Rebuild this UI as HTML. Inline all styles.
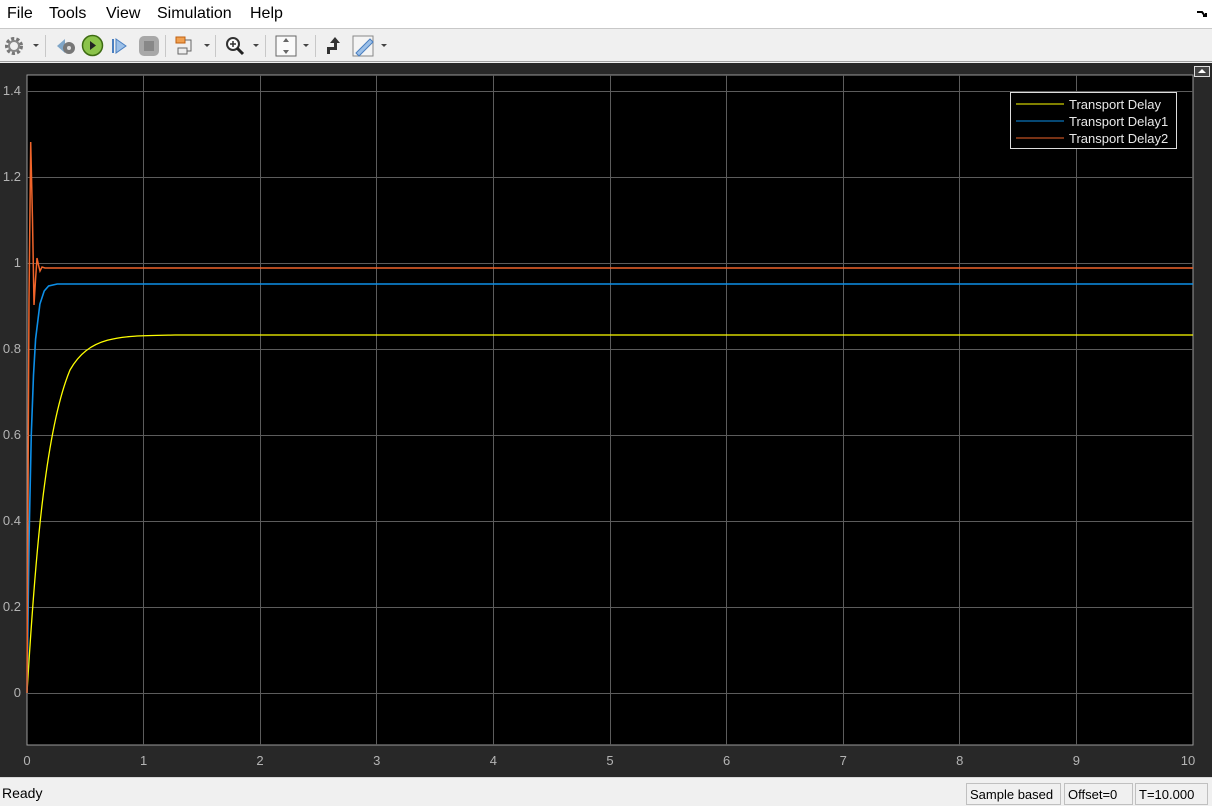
<!DOCTYPE html>
<html><head><meta charset="utf-8"><style>
*{margin:0;padding:0;box-sizing:border-box}
body{width:1212px;height:806px;overflow:hidden;background:#f0f0f0;font-family:"Liberation Sans",sans-serif;position:relative}
#menu{position:absolute;left:0;top:0;width:1212px;height:29px;background:#fff;border-bottom:1px solid #c8c8c8;font-size:16px;color:#000}
#menu span{position:absolute;top:5px}
#tb{position:absolute;left:0;top:30px;width:1212px;height:32px;background:#f0f0f0;border-bottom:1px solid #a0a0a0}
.sep{position:absolute;top:5px;width:1px;height:22px;background:#c8c8c8}
.dd{position:absolute;top:14px;width:0;height:0;border-left:3px solid transparent;border-right:3px solid transparent;border-top:3px solid #444}
#status{position:absolute;left:0;top:777px;width:1212px;height:29px;background:#f0f0f0;border-top:1px solid #d8d8d8;font-size:14px}
.sb{position:absolute;top:5px;height:22px;border:1px solid #c0c0c0;padding:3px 0 0 3px;font-size:13px;color:#000}
</style></head><body>
<div id="menu">
<span style="left:7px">File</span><span style="left:49px">Tools</span><span style="left:106px">View</span><span style="left:157px">Simulation</span><span style="left:250px">Help</span>
<svg style="position:absolute;left:1196px;top:9px" width="12" height="10"><path d="M1 3 L6 3 L9 7 M7 7 L10 7 L10 4" stroke="#000" stroke-width="2" fill="none"/></svg>
</div>
<div id="tb">
<svg style="position:absolute;left:4px;top:6px" width="20" height="20"><circle cx="10" cy="10" r="7" fill="none" stroke="#777" stroke-width="4" stroke-dasharray="3 2"/><circle cx="10" cy="10" r="5" fill="none" stroke="#888" stroke-width="2"/></svg>
<div class="dd" style="left:33px"></div>
<div class="sep" style="left:45px"></div>
<svg style="position:absolute;left:55px;top:5px" width="22" height="22"><path d="M2 11 L10 4 L10 18 Z" fill="#7fa6c8"/><circle cx="14" cy="13" r="6" fill="#777"/><circle cx="14" cy="13" r="2" fill="#ddd"/></svg>
<svg style="position:absolute;left:81px;top:4px" width="23" height="23"><circle cx="11.5" cy="11.5" r="10" fill="#8bc34a" stroke="#3d6b12" stroke-width="1.5"/><path d="M9 7 L15 11.5 L9 16Z" fill="#222"/></svg>
<svg style="position:absolute;left:110px;top:6px" width="20" height="20"><rect x="2" y="3" width="2" height="14" fill="#4a7fc0"/><path d="M6 3 L16 10 L6 17Z" fill="#9cc0e8" stroke="#4a7fc0"/></svg>
<svg style="position:absolute;left:138px;top:5px" width="22" height="22"><rect x="1" y="1" width="20" height="20" rx="5" fill="#a8a8a8"/><rect x="6" y="6" width="10" height="10" fill="#888"/></svg>
<div class="sep" style="left:165px"></div>
<svg style="position:absolute;left:174px;top:5px" width="22" height="22"><rect x="2" y="2" width="9" height="6" fill="#f0a050" stroke="#c06010"/><rect x="4" y="13" width="9" height="6" fill="#eee" stroke="#666"/><path d="M11 5 L17 5 L17 16 L13 16" stroke="#666" fill="none"/></svg>
<div class="dd" style="left:204px"></div>
<div class="sep" style="left:215px"></div>
<svg style="position:absolute;left:224px;top:5px" width="22" height="22"><circle cx="9" cy="9" r="6" fill="#fff" stroke="#333" stroke-width="2"/><path d="M6 9 H12 M9 6 V12" stroke="#333" stroke-width="1.5"/><path d="M13 13 L19 19" stroke="#222" stroke-width="3"/></svg>
<div class="dd" style="left:253px"></div>
<div class="sep" style="left:265px"></div>
<svg style="position:absolute;left:275px;top:5px" width="22" height="22"><rect x="1" y="1" width="20" height="20" fill="#fafafa" stroke="#666"/><path d="M11 3 L8 7 H14Z M11 19 L8 15 H14Z" fill="#666"/></svg>
<div class="dd" style="left:303px"></div>
<div class="sep" style="left:315px"></div>
<svg style="position:absolute;left:324px;top:5px" width="20" height="22"><path d="M3 19 V12 H10 V8 H6 L11 2 L16 8 H13 V15 H6 V19Z" fill="#333"/></svg>
<svg style="position:absolute;left:352px;top:5px" width="22" height="22"><rect x="1" y="1" width="20" height="20" fill="#f4f4f4" stroke="#888"/><path d="M4 18 L18 4 L21 7 L7 21Z" fill="#9cc0e8" stroke="#4a7fc0"/></svg>
<div class="dd" style="left:381px"></div>
</div>
<div style="position:absolute;left:0;top:63px;width:1212px;height:714px;background:#282828"></div>
<div style="position:absolute;left:1194px;top:66px;width:16px;height:11px;border:1px solid #ddd;background:#444"><div style="margin:2px auto 0;width:0;height:0;border-left:4px solid transparent;border-right:4px solid transparent;border-bottom:4px solid #fff"></div></div>
<svg style="position:absolute;left:0;top:0" width="1212" height="806" font-family="Liberation Sans" font-size="13" fill="#b4b4b4">
<rect x="27" y="75" width="1166" height="670" fill="#000" stroke="#9a9a9a" stroke-width="1"/>
<g stroke="#5c5c5c" stroke-width="1">
<path d="M27 693.5H1193M27 607.5H1193M27 521.5H1193M27 435.5H1193M27 349.5H1193M27 263.5H1193M27 177.5H1193M27 91.5H1193"/>
<path d="M143.5 75V745M260.5 75V745M376.5 75V745M493.5 75V745M610.5 75V745M726.5 75V745M843.5 75V745M959.5 75V745M1076.5 75V745"/>
</g>
<g text-anchor="end">
<text x="21" y="697">0</text><text x="21" y="611">0.2</text><text x="21" y="525">0.4</text><text x="21" y="439">0.6</text><text x="21" y="353">0.8</text><text x="21" y="267">1</text><text x="21" y="181">1.2</text><text x="21" y="95">1.4</text>
</g>
<g text-anchor="middle">
<text x="27" y="765">0</text><text x="143.6" y="765">1</text><text x="260" y="765">2</text><text x="376.8" y="765">3</text><text x="493.4" y="765">4</text><text x="610" y="765">5</text><text x="726.6" y="765">6</text><text x="843.2" y="765">7</text><text x="959.8" y="765">8</text><text x="1076.4" y="765">9</text><text x="1188" y="765">10</text>
</g>
<path fill="none" stroke="#ffff00" stroke-width="1.3" d="M27,693 C35,560 45,430 70,370 C90,335 120,336 175,335 L1193,335"/>
<polyline fill="none" stroke="#0d8fe8" stroke-width="1.6" points="27,693 29.2,532 31.3,434 33.5,375 35.6,339 39.9,304 44.2,291 48.6,286 57.2,284 1193,284"/>
<polyline fill="none" stroke="#f0642a" stroke-width="1.5" points="27,693 29,300 30.7,142 32.5,220 34,305 35.5,280 37,258 38.5,265 40,271 42,267 45,268 1193,268"/>
<rect x="1010.5" y="92.5" width="166" height="56" fill="#000" stroke="#ddd"/>
<path d="M1016 104H1064" stroke="#ffff00"/><path d="M1016 121H1064" stroke="#0d8fe8"/><path d="M1016 138H1064" stroke="#f0642a"/>
<g fill="#e8e8e8" font-size="13"><text x="1069" y="109">Transport Delay</text><text x="1069" y="126">Transport Delay1</text><text x="1069" y="143">Transport Delay2</text></g>
</svg>
<div id="status">
<span style="position:absolute;left:2px;top:7px">Ready</span>
<div class="sb" style="left:966px;width:95px">Sample based</div>
<div class="sb" style="left:1064px;width:69px">Offset=0</div>
<div class="sb" style="left:1135px;width:73px">T=10.000</div>
</div>
</body></html>
